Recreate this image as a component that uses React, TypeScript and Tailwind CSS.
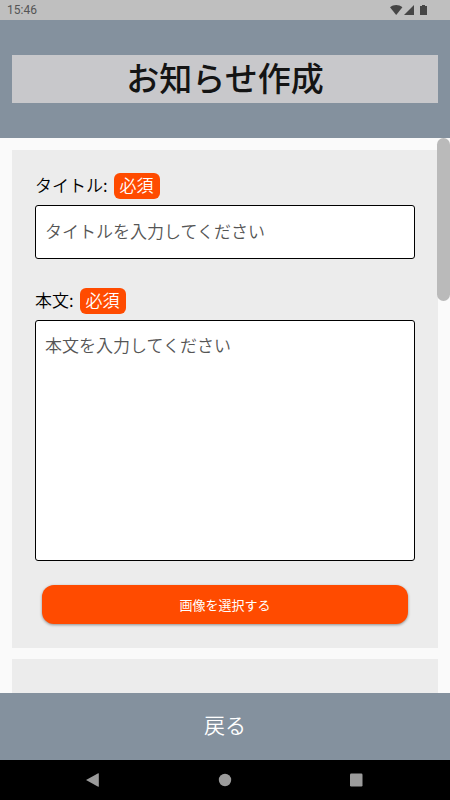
import { useEffect, useRef, useState } from "react";
import type { ReactNode } from "react";

function StatusBar() {
  return (
    <div className="flex h-5 shrink-0 items-center justify-between bg-[#bfbfbf] pr-[22px] pl-[7px] text-[#555555]">
      <span className="font-['Roboto',sans-serif] text-[12px] leading-5 font-normal">15:46</span>
      <svg className="h-3 w-[38px]" viewBox="0 0 38 12" fill="#464646" aria-hidden="true">
        <path d="M0 3.2C3.6.2 8.8.2 12.4 3.2L6.2 11Z" />
        <path d="M14 11L24 1v10Z" />
        <path d="M30 2h2V1h3v1h2v9h-7Z" />
      </svg>
    </div>
  );
}

function FieldLabel({ htmlFor, children }: { htmlFor: string; children: ReactNode }) {
  return (
    <label
      htmlFor={htmlFor}
      className="mb-1.5 flex h-[26px] items-center gap-1.5 text-[17px] leading-6 text-black"
    >
      <span className="pb-0.5">{children}</span>
      <span className="rounded-md bg-[#ff4b00] px-1.5 pb-0.5 text-white">必須</span>
    </label>
  );
}

function NavigationBar() {
  return (
    <nav className="flex h-10 shrink-0 items-center justify-between bg-black px-[86px]">
      <button type="button" aria-label="Back">
        <svg className="size-[14px]" viewBox="0 0 14 14" fill="#9b9b9b">
          <path d="M0 7 12.2.3q.6-.3.6.4v12.6q0 .7-.6.4Z" />
        </svg>
      </button>
      <button type="button" aria-label="Home">
        <svg className="size-[14px]" viewBox="0 0 14 14" fill="#9b9b9b">
          <circle cx="7" cy="7" r="6.2" />
        </svg>
      </button>
      <button type="button" aria-label="Recent apps">
        <svg className="size-[14px]" viewBox="0 0 14 14" fill="#9b9b9b">
          <rect x="0" y="0.5" width="12.5" height="13" rx="1.2" />
        </svg>
      </button>
    </nav>
  );
}

export default function App() {
  const scrollRef = useRef<HTMLDivElement>(null);
  const [thumb, setThumb] = useState({ top: 0, height: 0 });

  const syncThumb = () => {
    const el = scrollRef.current;
    if (!el) return;
    const ratio = el.clientHeight / el.scrollHeight;
    setThumb({ top: el.scrollTop * ratio, height: ratio < 1 ? el.clientHeight * ratio : 0 });
  };

  useEffect(() => {
    syncThumb();
    window.addEventListener("resize", syncThumb);
    return () => window.removeEventListener("resize", syncThumb);
  }, []);

  return (
    <div className="flex h-dvh flex-col bg-[#fafafa] font-['Noto_Sans_CJK_JP',sans-serif] font-[350]">
      <StatusBar />

      <header className="shrink-0 bg-[#84919e] px-3 py-[35px]">
        <h1 className="bg-[#c8c8cb] pb-1 text-center text-[33px] leading-[44px] font-medium text-[#141414]">
          お知らせ作成
        </h1>
      </header>

      <main className="relative min-h-0 flex-1">
        <div
          ref={scrollRef}
          onScroll={syncThumb}
          className="flex h-full flex-col gap-[11px] overflow-y-auto p-3 [scrollbar-width:none]"
        >
          <form className="shrink-0 bg-[#ececec] px-[23px] pt-[23px] pb-6" onSubmit={(e) => e.preventDefault()}>
            <FieldLabel htmlFor="title">タイトル:</FieldLabel>
            <input
              id="title"
              type="text"
              placeholder="タイトルを入力してください"
              className="mb-[29px] block h-[54px] w-full rounded-[3px] border border-black bg-white px-[9px] pb-1 text-[17px] text-black placeholder:text-[#555555]"
            />

            <FieldLabel htmlFor="body">本文:</FieldLabel>
            <textarea
              id="body"
              placeholder="本文を入力してください"
              className="mb-6 block h-[241px] w-full resize-none rounded-[3px] border border-black bg-white px-[9px] py-3 text-[17px] leading-6 text-black placeholder:text-[#555555]"
            />

            <div className="px-[7px]">
              <button
                type="button"
                className="block h-[39px] w-full rounded-xl bg-[#ff4b00] text-[13px] font-normal text-white shadow-[0_1px_3px_rgba(0,0,0,0.4)]"
              >
                画像を選択する
              </button>
            </div>
          </form>

          <section className="h-[1354px] shrink-0 bg-[#ececec]" />
        </div>

        {/* scroll thumb */}
        <div
          className="pointer-events-none absolute top-0 right-0 w-[13px] rounded-full bg-[#bababa]"
          style={{ height: thumb.height, transform: `translateY(${thumb.top}px)` }}
        />
      </main>

      <button type="button" className="h-[67px] shrink-0 bg-[#84919e] pb-1 text-[21px] text-white">
        戻る
      </button>

      <NavigationBar />
    </div>
  );
}
